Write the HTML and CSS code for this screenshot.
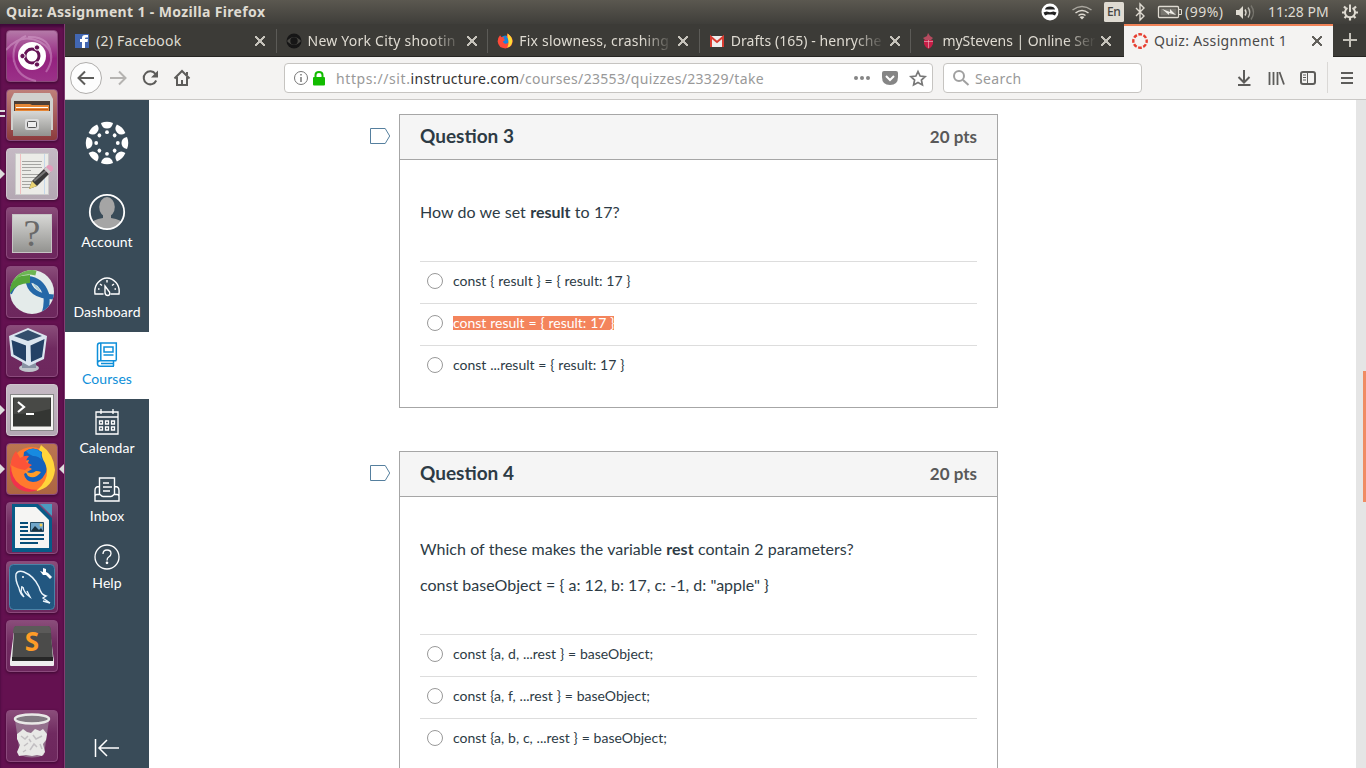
FILE: index.html
```html
<!DOCTYPE html>
<html lang="en">
<head>
<meta charset="utf-8">
<title>Quiz: Assignment 1</title>
<link rel="stylesheet" href="styles.css">
</head>
<body>
<header class="panel">
  <span class="panel-title">Quiz: Assignment 1 - Mozilla Firefox</span>
  <svg class="indicators" width="326" height="24" viewBox="1040 0 326 24">
    <circle cx="1050" cy="12" r="8.5" fill="#fff"/>
    <path d="M1045 9.500q.5-3 5-3t5 3z" fill="#222"/><path d="M1043.500 12.500l3-1 3.500.8 3.500-.8 3 1-1.500 3-2.500-1h-5l-2.500 1z" fill="#222"/>
    <g fill="none" stroke="#dfdbd2" stroke-width="1.5"><path d="M1072.500 10q9.500-7 19 0" stroke="#aaa79f"/><path d="M1075.500 13q6.500-5 13 0"/><path d="M1078.500 15.500q3.500-2.500 7 0"/></g><path d="M1079.500 17q2.500-1.500 5 0l-2.500 2.500z" fill="#dfdbd2"/>
    <rect x="1104" y="2" width="20" height="20" rx="1.500" fill="#dfdbd2"/>
    <path d="M1136 8l8 8-4 4V4l4 4-8 8" fill="none" stroke="#dfdbd2" stroke-width="1.400"/>
    <rect x="1158.500" y="6.500" width="20" height="11" rx="1" fill="none" stroke="#dfdbd2" stroke-width="1.300"/><rect x="1160.500" y="8.500" width="16" height="7" fill="#77756e"/><path d="M1179 9.500h2.500v5h-2.500" fill="none" stroke="#dfdbd2"/><path d="M1162 9l8 3v-3l6 6-7-2v2z" fill="#eeece6"/>
    <path d="M1236 10h3l4-4v13l-4-4h-3z" fill="#dfdbd2"/><g fill="none" stroke="#dfdbd2" stroke-width="1.400"><path d="M1245 9.500q2 3 0 6"/><path d="M1248 7.500q3.500 5 0 10" stroke="#bbb8b0"/><path d="M1251 5.500q5 7 0 14" stroke="#77756e"/></g>
    <g fill="none" stroke="#dfdbd2"><path d="M1347.500 8a5 5 0 1 0 5 0" stroke-width="2"/><path d="M1350 4.500v7.500" stroke-width="2"/><path d="M1344 6.500l2 2M1356 6.500l-2 2M1342 12.500h3M1355 12.500h3M1344.500 18l2-2M1355.500 18l-2-2M1350 17.500v3" stroke-width="2.200"/></g>
  </svg>
  <span class="ind-lang">En</span><span class="ind-battery">(99%)</span><span class="ind-clock">11:28 PM</span>
</header>

<div class="desktop">
<aside class="launcher">
  <div class="tile tile-dash"><svg viewBox="0 0 52 52"><g fill="none" stroke="#e4b6dc" opacity=".4" stroke-width="2"><path d="M0 20Q15 2 34 12t6 30"/><path d="M8 32Q5 12 20 6"/><path d="M8 30q3 17 22 21"/><path d="M22 7q24-1 23 22"/></g><circle cx="26" cy="26" r="14" fill="#fff"/><circle cx="26" cy="26" r="7" fill="none" stroke="#651355" stroke-width="3"/><g fill="#651355" stroke="#fff"><circle cx="16.500" cy="26" r="2.700"/><circle cx="31" cy="17.500" r="2.700"/><circle cx="31" cy="34.500" r="2.700"/></g></svg></div>
  <div class="tile tile-files"><i class="run two"></i><svg viewBox="0 0 52 52"><defs><linearGradient id="metal" x2="0" y2="1"><stop stop-color="#d8d8d6"/><stop offset="1" stop-color="#92928f"/></linearGradient></defs><path d="M8 4h36l3 6v31H5V10z" fill="#d0d0ce"/><path d="M8 12h36v14H8z" fill="#4b3e38"/><path d="M9 15h15l2 1h17v7H9z" fill="#e58737"/><path d="M10 18.500h32" stroke="#fff"/><path d="M10 20.500h32" stroke="#c25a18"/><path d="M7 22h38v25H7z" fill="url(#metal)"/><rect x="19" y="30" width="14" height="11" rx="2" fill="#ddd"/><rect x="21.500" y="32.500" width="9" height="6" rx="1" fill="#eee" stroke="#555"/></svg></div>
  <div class="tile tile-light"><i class="run"></i><svg viewBox="0 0 52 52"><path d="M9.500 5.500h33v41h-33z" fill="#ecece8" stroke="#ccc"/><path d="M14.500 6v40" stroke="#f0c0c0"/><path d="M38.500 6v40" stroke="#c5d8ea"/><path d="M16 13.500h20M16 16.500h19M16 19.500h20M16 22.500h9M16 26.500h19M16 29.500h16M16 33.500h12M16 36.500h14M16 39.500h8" stroke="#a5a5a2"/><path d="M23 41l3-8 14-14 5 5-14 14z" fill="#393939"/><path d="M28 33l14-12" stroke="#777" stroke-width="2"/><path d="M23 41l3-8 5 5z" fill="#e9d271"/><path d="M38 21l4-4q6 0 5 5l-4 4z" fill="#e49abb"/><path d="M38 21l2-2 5 5-2 2z" fill="#ccc"/></svg></div>
  <div class="tile"><svg viewBox="0 0 52 52"><rect x="6.500" y="7.500" width="39" height="38" fill="url(#metal)" stroke="#c7c4c5"/></svg><b class="qmark">?</b></div>
  <div class="tile"><svg viewBox="0 0 52 52"><defs><clipPath id="globe"><circle cx="26" cy="26" r="22"/></clipPath></defs><circle cx="26" cy="26" r="22" fill="#e4ebea"/><g clip-path="url(#globe)" fill="none"><path d="M3 27Q9 13 22 13q13 1 18 15 2 10-2 22" stroke="#2468a8" stroke-width="6"/><path d="M22 13q1 18 28 18" stroke="#2468a8" stroke-width="5"/><path d="M1 25Q8 13 24 13" stroke="#55a63a" stroke-width="8"/><path d="M6 14Q14 3 30 7" stroke="#6db553" stroke-width="5"/><path d="M27 17q5 3 8 9-6-3-8-9z" fill="#a9ccd4"/></g></svg></div>
  <div class="tile"><svg viewBox="0 0 52 52"><ellipse cx="23" cy="43" rx="10" ry="4" fill="#bfc4cb"/><path d="M16 36h14v7H16z" fill="#8792a2"/><path d="M3 11L22 3l19 8-3 23-15 7L5 31z" fill="#dbe5ef"/><path d="M8 11l14-6 14 6-14 5z" fill="#334e6c"/><path d="M5.500 15L20 20.500v16L7.500 29.500zM24.500 20.500L38.500 14l-2.500 18-11 5z" fill="#234165"/></svg></div>
  <div class="tile tile-light"><i class="run"></i><svg viewBox="0 0 52 52"><rect x="4.500" y="10.500" width="43" height="36" fill="#f5f5f3" stroke="#888"/><rect x="7" y="13.500" width="38" height="29" fill="#343633"/><path d="M8 14h36v11Q25 30 8 30z" fill="#484946"/><path d="M12 18l6 5-6 5M20 30h8" stroke="#fff" stroke-width="2.200" fill="none"/></svg></div>
  <div class="tile tile-fox"><i class="run"></i><i class="run right"></i><svg viewBox="0 0 52 52"><circle cx="26" cy="26" r="22" fill="#ff7a2e"/><path d="M6 17q-3 12 4 21 8 9 22 9-15 5-24-5-7-9-2-25z" fill="#f0324c"/><path d="M35 2q13 9 14 25-2 18-19 21 12-9 11-21-1-6-6-11-4-7 0-14z" fill="#ffd53a"/><path d="M18 9q9-7 18 0-1 5 3 11 3 7 0 11-4 8-12 8-8-1-9-8l8-5-5-3 2-6-6 1z" fill="#1262bd"/><path d="M20 8q8-5 15 1-1 5 2 9-4-5-10-5-5-2-7-5z" fill="#178ae0"/><path d="M5 22q0-8 5-14l4 7q5-3 9-2-3 3-3 6l6 3-7 5q-8-1-14-5z" fill="#fc5338"/><path d="M19 28q6 4 11 0 3 0 5 1-6 8-13 4z" fill="#ff9e29"/></svg></div>
  <div class="tile"><svg viewBox="0 0 52 52"><path d="M6 2h26l14 14v34H6z" fill="#075b87"/><path d="M34 2h12v12z" fill="#4b9bc0"/><path d="M9 5h21l13 13v28H9z" fill="#f5f5f3"/><path d="M14 21h8M14 25h8M14 29h8M14 33h24M14 37h24M14 41h18" stroke="#064e78" stroke-width="2"/><path d="M24.500 20.500h13v9h-13z" fill="#6fa6ca" stroke="#244c64"/><path d="M25 29l4-5 4 4 2-2 2 3z" fill="#183240"/><circle cx="35" cy="23" r="1.500" fill="#f2cc52"/></svg></div>
  <div class="tile"><svg viewBox="0 0 52 52"><rect x="3.500" y="3.500" width="45" height="45" rx="4" fill="#225780" stroke="#4b83a7"/><path d="M18 36q-4-3-5-9-4-8-3-14 2-4 8-2 10 4 15 15 2 8 7 9l-3 2 7 5-7-2M18 36l-3-5 1-6M17 26q1 6 7 10l-3-6" fill="none" stroke="#eaf4fb" stroke-width="1.400"/><circle cx="17" cy="16" r="1" fill="#fff"/><path d="M37 7l3 1v3l2 1 4 4-2 2-4-4-3 0-3-4 3 1z" fill="#fff"/></svg></div>
  <div class="tile"><svg viewBox="0 0 52 52"><path d="M8 11h36l4 30v4q0 1-1 1H5q-1 0-1-1v-4z" fill="#eee"/><path d="M10 6h32q3 0 3 6l2 28H6l2-28q0-6 2-6z" fill="#4b4b4a"/><path d="M10 6h32q3 0 3 7H7q0-7 3-7z" fill="#5b5a59"/><path d="M6 37h41v4H6z" fill="#272727"/></svg><b class="subl">S</b></div>
  <div class="tile tile-trash"><svg viewBox="0 0 52 52"><path d="M9 10l5 35q12 5 24 0l5-35z" fill="#a08a9c" opacity=".7"/><path d="M11 24l4-3 2-2 4 3 4 1 4-4 5 2 3-2 4 5-1 6-3 4 2 8-3 4-5-1-5 1-6-1-7 1-2-4 3-7-3-6z" fill="#e8e8e6"/><path d="M15 26l4 3 3-3M27 25l3 4 6-3M18 36l4-3M24 40l4-6 3 3M34 34l2 5M17 42l3-2M23 29l2 3" stroke="#c2bfc2" fill="none" stroke-width="1.500"/><ellipse cx="26" cy="9" rx="17" ry="4.500" fill="#827a82" stroke="#e9e9e7" stroke-width="2.500"/></svg></div>
</aside>

<main class="browser">
  <nav class="tabs">
    <div class="tab"><svg class="fav" viewBox="0 0 16 16"><path d="M1 1h14v14H1z" fill="#4267b2"/><path d="M8 15V9H6V6h2V5q0-3 3-3h3v2.500h-2q-1 0-1 1V6h3l-.4 3H11v6z" fill="#fff"/></svg><span>(2) Facebook</span><i class="x"></i></div>
    <div class="tab"><svg class="fav" viewBox="0 0 16 16"><circle cx="8" cy="8" r="7.500" fill="#161616"/><path d="M1 8q7-8 14 0-7 8-14 0z" fill="#4a4945"/><circle cx="8" cy="8" r="3.700" fill="#161616"/></svg><span>New York City shootin</span><i class="x"></i></div>
    <div class="tab"><svg class="fav" viewBox="0 0 52 52"><circle cx="27" cy="25" r="17" fill="#1685df"/><path d="M34 2q16 10 17 24-1 22-24 24Q5 50 2 28 2 15 10 7l5 7 9-1-3 6 6 4-8 5q3 8 10 7 9-1 10-10-1-8-8-12z" fill="#ff4a39"/><path d="M34 2q15 9 16 24-1 17-17 22Q41 34 35 17z" fill="#ffdb37"/></svg><span>Fix slowness, crashing</span><i class="x"></i></div>
    <div class="tab"><svg class="fav" viewBox="0 0 16 16"><path d="M1 3h14v11H1z" fill="#eee"/><path d="M2 14V4l6 5 6-5v10" fill="none" stroke="#d93c31" stroke-width="2"/></svg><span>Drafts (165) - henryche</span><i class="x"></i></div>
    <div class="tab"><svg class="fav" viewBox="0 0 16 16"><path d="M4 7h9v4q-1 3-4.500 5Q5 14 4 11z" fill="#c71e46"/><path d="M8 0l2 3 3 2-2 2H5L3 5l4-2z" fill="#b64b5f"/><path d="M4 8.500h9M8.500 7v8" stroke="#e8bdc7" stroke-width=".6"/></svg><span>myStevens | Online Ser</span><i class="x"></i></div>
    <div class="tab active"><svg class="fav" viewBox="0 0 16 16"><circle cx="8" cy="8" r="6.700" fill="none" stroke="#e63e30" stroke-width="2.400" stroke-dasharray="3.700 1.560" stroke-dashoffset="1.850"/></svg><span>Quiz: Assignment 1</span><i class="x"></i></div>
    <div class="newtab"></div>
  </nav>
  <div class="toolbar">
    <svg class="nav-icons" width="134" height="42" viewBox="65 57 134 42" fill="none" stroke="#5d5c5a" stroke-width="2"><circle cx="86" cy="78" r="15.500" fill="#fdfdfd" stroke="#b0aeac" stroke-width="1"/><path d="M94 78H79m6-6.500L78.500 78l6.500 6.500"/><path d="M110 78h15m-6-6.500l6.500 6.500-6.500 6.500" stroke="#b5b3b1"/><path d="M155.500 74a6.500 6.500 0 1 0 .7 6.500"/><path d="M151 77.500h7V70.500z" fill="#5d5c5a" stroke="none"/><path d="M174.500 78.500L182 71l7.500 7.500M177 77v8h10v-8M182 85v-5M187 75v-3"/></svg>
    <div class="urlbar"><svg width="42" height="28" viewBox="289 64 42 28"><circle cx="301" cy="78" r="6.500" fill="none" stroke="#777"/><path d="M301 77v5M301 74v1.500" stroke="#777" stroke-width="1.500"/><rect x="313" y="77" width="12" height="8.500" rx="1" fill="#12bc00"/><path d="M315.500 78v-3q0-3 3.500-3t3.500 3v3" stroke="#12bc00" stroke-width="2" fill="none"/></svg><span class="url"><span class="scheme">https://sit.</span><b>instructure.com</b>/courses/23553/quizzes/23329/take</span>
      <svg class="url-actions" width="84" height="28" viewBox="848 64 84 28"><g fill="#858585"><circle cx="856" cy="78" r="2"/><circle cx="862" cy="78" r="2"/><circle cx="868" cy="78" r="2"/><path d="M884 71h12q2 0 2 2v4q0 8-8 8t-8-8v-4q0-2 2-2z"/></g><path d="M886 76l4 4 4-4" fill="none" stroke="#fff" stroke-width="2"/><path d="M918 71.500l2.100 4.500 5 .6-3.700 3.400 1 4.900-4.400-2.400-4.400 2.400 1-4.900-3.700-3.400 5-.6z" fill="none" stroke="#777" stroke-width="1.700"/></svg></div>
    <div class="search"><svg width="30" height="28" viewBox="944 64 30 28" fill="none" stroke="#a0a0a0" stroke-width="2"><circle cx="958" cy="76" r="5"/><path d="M962 80l5.500 5"/></svg><span>Search</span></div>
    <svg class="right-icons" width="134" height="42" viewBox="1232 57 134 42" fill="none" stroke="#5d5c5a" stroke-width="2"><path d="M1244 70v12m-5.500-5l5.500 5.500 5.500-5.500M1238 85h12.500"/><path d="M1269.500 72v13M1273.500 72v13M1277.500 72v13M1279.500 72l4.500 12.500" stroke-width="1.800"/><rect x="1301" y="72" width="14" height="12" rx="2"/><path d="M1307.500 72v12M1303 75h3M1303 77.500h3M1303 80h3" stroke-width="1"/><path d="M1327.500 62v31" stroke="#dad8d6" stroke-width="1"/><path d="M1341 73h12M1341 78h12M1341 83h12"/></svg>
  </div>

  <div class="page">
    <nav class="side">
      <div class="logo"><svg width="44" height="44" viewBox="-22 -22 44 44" fill="#fff"><defs><g id="seg"><path d="M-6-20q6-2.500 12 0Q5-14.500 0-14.500T-6-20z"/><circle cy="-10.800" r="1.900"/></g></defs><use href="#seg"/><use href="#seg" transform="rotate(45)"/><use href="#seg" transform="rotate(90)"/><use href="#seg" transform="rotate(135)"/><use href="#seg" transform="rotate(180)"/><use href="#seg" transform="rotate(225)"/><use href="#seg" transform="rotate(270)"/><use href="#seg" transform="rotate(315)"/></svg></div>
      <a class="item account"><svg width="38" height="38" viewBox="0 0 38 38"><defs><clipPath id="av"><circle cx="19" cy="19" r="17"/></clipPath></defs><g clip-path="url(#av)" fill="#a5a5a5"><ellipse cx="19" cy="14" rx="7.800" ry="10"/><path d="M15 20h8v5q11 1 13 8v5H2v-5q2-7 13-8z"/></g><circle cx="19" cy="19" r="17.200" fill="none" stroke="#fff" stroke-width="1.800"/></svg><span>Account</span></a>
      <a class="item dash"><svg width="26" height="26" viewBox="0 0 26 26" fill="none" stroke="#fff" stroke-width="1.400"><path d="M9.500 21H1q-1-7 3-11.500Q8 5 13 5t9 4.500q4 4.500 3 11.500h-8.500"/><path d="M11 13l4.500 6q1 3-1.500 3.500-3 0-3-3z"/><path d="M13 7v2.500M6 11l2 1.500M20 11l-2 1.500M4 16h1.500M20.500 16H22"/></svg><span>Dashboard</span></a>
      <a class="item current"><svg width="26" height="26" viewBox="0 0 26 26" fill="none" stroke="#0e8fd9" stroke-width="1.500"><path d="M5.500 24.300h14.500M19.500 24v-5M22.300 18.800H6q-2.500 0-2.500 2.700T6 24.300M3.500 21.500V3.500Q3.500 1 6 1h16.300v17.500M6.800 1v17.500M10 5h9v5h-9zM9.500 13h10M7 21.500h12"/></svg><span>Courses</span></a>
      <a class="item"><svg width="26" height="26" viewBox="0 0 26 26" fill="none" stroke="#fff" stroke-width="1.300"><path d="M2 3h22v22H2zM2 8h22M7 0v5M19 0v5"/><path d="M5.500 12h3v3h-3zM11.500 12h3v3h-3zM17.500 12h3v3h-3zM5.500 18h3v3h-3zM11.500 18h3v3h-3zM17.500 18h3v3h-3z"/></svg><span>Calendar</span></a>
      <a class="item"><svg width="26" height="26" viewBox="0 0 26 26" fill="none" stroke="#fff" stroke-width="1.400"><path d="M5.500 17V1h15v16M5 9.500q-4 0-4 4V24h24V13.500q0-4-4-4M1 19.500q0-2 2-2h3q2 2 3 2h8q1 0 3-2h3q2 0 2 2M9 6h6M9 10h9M9 14h7"/></svg><span>Inbox</span></a>
      <a class="item"><svg width="26" height="26" viewBox="0 0 26 26" fill="none" stroke="#fff" stroke-width="1.300"><circle cx="13" cy="13" r="12"/><path d="M9 10q0-4 4-4t4 3.500q0 2-2 3.300-2 1.200-2 3.700"/><circle cx="13" cy="18.800" r=".7" fill="#fff"/></svg><span>Help</span></a>
      <svg class="collapse" width="28" height="20" viewBox="0 0 28 20" fill="none" stroke="#fff" stroke-width="1.500"><path d="M2.500 1v18M26 10H6M14 2l-8 8 8 8"/></svg>
    </nav>
    <section class="content">
      <div class="question-row">
        <svg class="flag" width="21" height="18" viewBox="0 0 21 18"><path d="M.5 1.500h14.700l4.500 7.500-4.500 7.500H.5z" fill="#fff" stroke="#557f9e"/></svg>
        <article class="question q3">
          <header class="q-head"><h2>Question 3</h2><span>20 pts</span></header>
          <div class="q-body"><p>How do we set <b>result</b> to 17?</p></div>
          <div class="answers">
            <label><i class="radio"></i><span>const { result } = { result: 17 }</span></label>
            <label><i class="radio"></i><span class="selected">const result = { result: 17 }</span></label>
            <label><i class="radio"></i><span>const ...result = { result: 17 }</span></label>
          </div>
        </article>
      </div>
      <div class="question-row">
        <svg class="flag" width="21" height="18" viewBox="0 0 21 18"><path d="M.5 1.500h14.700l4.500 7.500-4.500 7.500H.5z" fill="#fff" stroke="#557f9e"/></svg>
        <article class="question q4">
          <header class="q-head"><h2>Question 4</h2><span>20 pts</span></header>
          <div class="q-body"><p>Which of these makes the variable <b>rest</b> contain 2 parameters?</p><p class="code">const baseObject = { a: 12, b: 17, c: -1, d: "apple" }</p></div>
          <div class="answers">
            <label><i class="radio"></i><span>const {a, d, ...rest } = baseObject;</span></label>
            <label><i class="radio"></i><span>const {a, f, ...rest } = baseObject;</span></label>
            <label><i class="radio"></i><span>const {a, b, c, ...rest } = baseObject;</span></label>
          </div>
        </article>
      </div>
    </section>
    <div class="scrollbar"><div class="thumb"></div></div>
  </div>
</main>
</div>
</body>
</html>
```
FILE: styles.css
```css
* { box-sizing: border-box; }
body { margin: 0; width: 1366px; height: 768px; overflow: hidden; font-family: "Noto Sans", "Open Sans", sans-serif; }
.panel { position: relative; height: 24px; display: flex; justify-content: space-between; background: linear-gradient(#5b5850, #3f3e3a); color: #dfdbd2; font-size: 14px; line-height: 24px; white-space: nowrap; }
.panel-title { padding-left: 6px; font-weight: bold; letter-spacing: .35px; }
.ind-lang, .ind-battery, .ind-clock { position: absolute; top: 0; }
.ind-lang { left: 1107px; color: #464541; font-size: 12px; font-weight: 500; letter-spacing: -.4px; }
.ind-battery { left: 1185px; letter-spacing: .5px; }
.ind-clock { left: 1268px; letter-spacing: 0; }
.desktop { display: flex; height: 744px; }

.launcher { width: 65px; flex: none; padding: 6px 0 0 6px; display: flex; flex-direction: column; gap: 7px; background: #641150; border-right: 1px solid #823d72; box-shadow: inset 0 3px 3px #40083a; }
.tile { position: relative; width: 52px; height: 52px; flex: none; border: 1px solid #8b4a7c; border-radius: 4px; background: linear-gradient(#8a4d7a, #702a60 45%, #6d275d); box-shadow: 0 1px 3px #3c0830; }
.tile svg { display: block; width: 52px; height: 52px; margin: -1px; }
.tile-dash { background: linear-gradient(#b479a8, #94217f 55%, #9b3188); }
.tile-files { background: linear-gradient(#be7f7a, #8c3b3d); }
.tile-light { background: linear-gradient(#c5b9c4, #b4a8b3); border-color: #cfc4cd; }
.tile-fox { background: linear-gradient(#bb7651, #ad6542); }
.tile-trash { margin-top: 31px; }
.run { position: absolute; left: -7px; top: 20px; border: 5px solid transparent; border-left-color: #ddd; border-right: 0; }
.run.right { left: auto; right: -7px; border-right: 5px solid #ddd; border-left: 0; }
.run.two { border: solid #ddd; border-width: 2px 0; width: 5px; height: 7px; }
.qmark, .subl { position: absolute; inset: 0; text-align: center; }
.qmark { color: #696969; font: 38px/50px "Liberation Serif", serif; }
.subl { color: #ff9c27; font-size: 26px; line-height: 40px; }

.browser { width: 1301px; display: flex; flex-direction: column; }
.tabs { height: 33px; display: flex; background: #3c3b37; border-bottom: 1px solid #262522; color: #dfdbd2; font-size: 14px; }
.tab { position: relative; width: 211.6px; flex: none; display: flex; align-items: center; padding: 2px 0 0 9px; }
.tab:not(:nth-child(n+5))::after { content: ""; position: absolute; right: 0; top: 5px; height: 24px; border-right: 1px solid #5c5b57; }
.fav { width: 16px; height: 16px; margin-right: 6px; flex: none; }
.tab span { width: 154px; white-space: nowrap; line-height: 30px; letter-spacing: .22px; -webkit-mask-image: linear-gradient(90deg, #000 80%, transparent); }
.tab:first-child span, .tab.active span { -webkit-mask-image: none; }
.tab:nth-child(4) span { letter-spacing: .05px; }
.tab:nth-child(5) span { letter-spacing: -.05px; }
.tab.active span { letter-spacing: .35px; }
.x { width: 10px; height: 10px; margin-left: 5px; flex: none; background: linear-gradient(45deg, transparent 44%, #c5c2ba 44% 56%, transparent 56%), linear-gradient(-45deg, transparent 44%, #c5c2ba 44% 56%, transparent 56%); }
.tab.active { width: 209px; height: 33px; margin-left: 1px; padding: 0 0 2px 8px; background: #f4f3f2; border-top: 2px solid #f08257; color: #4a4948; }
.active .x { margin-left: 4px; filter: brightness(.5); }
.newtab { width: 33px; background: linear-gradient(#c5c2ba, #c5c2ba) 55% 50%/14px 2px no-repeat, linear-gradient(#c5c2ba, #c5c2ba) 53% 50%/2px 14px no-repeat; }
.toolbar { height: 43px; flex: none; display: flex; align-items: center; background: #f4f3f2; border-bottom: 1px solid #cac8c6; }
.urlbar, .search { height: 30px; display: flex; align-items: center; background: #fff; border: 1px solid #c6c4c1; border-radius: 4px; font-size: 14px; color: #999; letter-spacing: .37px; }
.urlbar { width: 649px; margin-left: 85px; padding-left: 4px; }
.url { flex: 1; padding-left: 5px; white-space: nowrap; letter-spacing: .32px; }
.scheme { letter-spacing: .6px; }
.url b { font-weight: normal; color: #333; letter-spacing: .3px; }
.search { width: 199px; margin-left: 10px; padding-left: 1px; }
.right-icons { margin-left: auto; }

.page { height: 668px; display: flex; background: #fff; font-family: Lato, sans-serif; color: #2d3b45; }
.side { width: 84px; flex: none; background: #394b58; color: #fff; display: flex; flex-direction: column; align-items: center; }
.logo { height: 86px; padding-top: 21px; }
.item { width: 84px; height: 67.6px; flex: none; display: flex; flex-direction: column; align-items: center; padding-top: 10px; font-size: 14px; line-height: 18px; letter-spacing: .06px; }
.item span { margin-top: 4px; }
.account { height: 78px; padding-top: 7px; }
.account span { margin-top: 2px; }
.dash { padding-top: 9px; }
.current { background: #fff; color: #0e8fd9; }
.current span { margin-top: 2px; }
.collapse { margin-top: auto; margin-bottom: 10px; }
.content { width: 1207px; padding: 14px 0 0 221px; overflow: hidden; }
.question-row { display: flex; align-items: flex-start; margin-bottom: 43px; }
.flag { margin: 13px 8px 0 0; flex: none; }
.question { width: 599px; flex: none; border: 1px solid #a6a6a6; }
.q3 { height: 294px; }
.q4 { height: 360px; }
.q-head { height: 45px; display: flex; justify-content: space-between; align-items: center; padding: 0 20px 2px; background: #f5f5f5; border-bottom: 1px solid #a6a6a6; }
.q-head h2 { margin: 0; font-size: 19px; line-height: 24px; }
.q-head span { font-size: 17px; font-weight: bold; color: #595959; }
.q-body { padding: 40px 20px 37px; font-size: 16px; line-height: 24px; word-spacing: .25px; }
.q-body p { margin: 0 0 12px; }
.q-body p:last-child { margin: 0; }
.q-body .code { word-spacing: .08px; }
.answers { padding: 0 20px; }
.answers label { height: 42px; display: flex; align-items: center; border-top: 1px solid #ddd; padding: 0 0 3px 7px; font-size: 14px; line-height: 14px; word-spacing: .25px; }
.radio { width: 16px; height: 16px; margin-right: 10px; border: 1px solid #999; border-radius: 50%; background: #fff; }
.selected { background: #f4845c; color: #fff; }
.scrollbar { width: 10px; flex: none; background: #e5e5e5; padding: 271px 0 0 7px; }
.thumb { height: 131px; background: #f08b63; }
```
